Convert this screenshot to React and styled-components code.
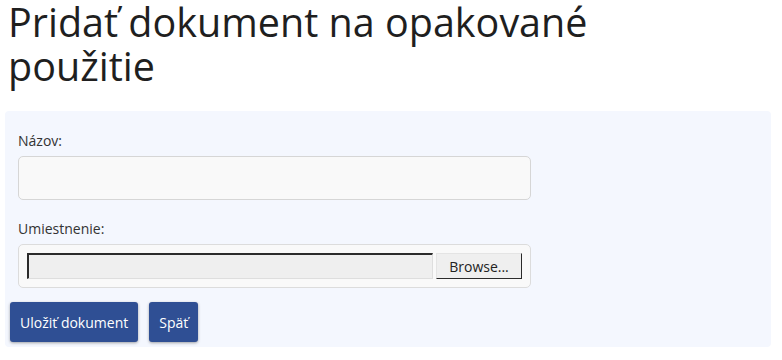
import styled, { createGlobalStyle } from 'styled-components';

const GlobalStyle = createGlobalStyle`
  html, body {
    margin: 0;
    padding: 0;
    background: #ffffff;
  }
  body {
    font-family: 'Open Sans', 'Noto Sans', sans-serif;
    color: #333333;
  }
`;

// obal stranky
const Stranka = styled.div`
  padding: 0 11px 0 5px;
`;

const Nadpis = styled.h1`
  margin: 0 0 23px 3px;
  max-width: 620px;
  font-size: 39.5px;
  line-height: 44px;
  font-weight: 400;
  color: #1f1f1f;
`;

const Panel = styled.form`
  display: flex;
  flex-direction: column;
  padding: 20px 0 5px 0;
  background-color: #f4f7fe;
  border-radius: 4px;
`;

const Skupina = styled.div`
  display: flex;
  flex-direction: column;
  padding: 0 13px;
  margin-bottom: ${(p) => p.$medzera || 0}px;
`;

const Popis = styled.label`
  font-size: 14px;
  line-height: 20px;
  margin-bottom: 5px;
  color: #333333;
`;

const Vstup = styled.input`
  box-sizing: border-box;
  width: 513px;
  height: 44px;
  background-color: #f9f9f9;
  border: 1px solid #d6d6d6;
  border-radius: 5px;
  outline: none;
`;

const SuborObal = styled.div`
  box-sizing: border-box;
  display: flex;
  column-gap: 3px;
  width: 513px;
  height: 44px;
  padding: 8px;
  background-color: #f9f9f9;
  border: 1px solid #dcdcdc;
  border-radius: 5px;
`;

const SuborPole = styled.div`
  flex: 1;
  background-color: #efefef;
  border-style: solid;
  border-width: 2px 1px 1px 2px;
  border-color: #2b2b2b #dedede #dedede #2b2b2b;
`;

const Prehladat = styled.button`
  box-sizing: border-box;
  width: 86px;
  padding: 0;
  font-family: 'Open Sans', 'Noto Sans', sans-serif;
  font-size: 14px;
  color: #222222;
  background-color: #efefef;
  border-style: solid;
  border-width: 1px;
  border-color: #e4e4e4 #2b2b2b #2b2b2b #e4e4e4;
`;

const Tlacidla = styled.div`
  display: flex;
  column-gap: 11px;
  padding-left: 5px;
`;

const Tlacidlo = styled.button`
  height: 40px;
  padding: 0 10px;
  font-family: 'Open Sans', 'Noto Sans', sans-serif;
  font-size: 14px;
  color: #ffffff;
  background-color: #2f4f94;
  border: none;
  border-radius: 3px;
  box-shadow: 0 1px 3px rgba(0, 0, 0, 0.35);
  cursor: pointer;
`;

export default function App() {
  return (
    <Stranka>
      <GlobalStyle />
      <Nadpis>Pridať dokument na opakované použitie</Nadpis>
      <Panel onSubmit={(e) => e.preventDefault()}>
        <Skupina $medzera={19}>
          <Popis htmlFor="nazov">Názov:</Popis>
          <Vstup id="nazov" type="text" />
        </Skupina>
        <Skupina $medzera={14}>
          <Popis>Umiestnenie:</Popis>
          <SuborObal>
            <SuborPole />
            <Prehladat type="button">Browse...</Prehladat>
          </SuborObal>
        </Skupina>
        <Tlacidla>
          <Tlacidlo type="submit">Uložiť dokument</Tlacidlo>
          <Tlacidlo type="button">Späť</Tlacidlo>
        </Tlacidla>
      </Panel>
    </Stranka>
  );
}
